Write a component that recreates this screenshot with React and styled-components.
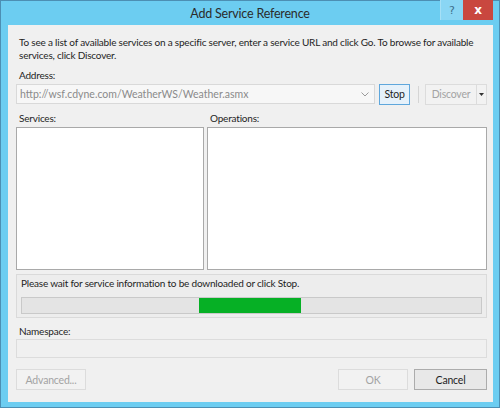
import React from 'react';
import styled, { createGlobalStyle } from 'styled-components';

const GlobalStyle = createGlobalStyle`
  html, body {
    margin: 0;
    padding: 0;
    background: #ffffff;
  }
  body {
    font-family: Lato, 'Open Sans', sans-serif;
  }
`;

const Window = styled.div`
  width: 500px;
  height: 408px;
  box-sizing: border-box;
  border: 1px solid #4c8fb3;
  background: #6ccdf1;
  display: flex;
  flex-direction: column;
`;

const TitleBar = styled.div`
  height: 24px;
  display: grid;
  grid-template-columns: 1fr auto 1fr;
  align-items: start;
`;

const Title = styled.div`
  grid-column: 2;
  font-size: 12.5px;
  letter-spacing: -0.2px;
  line-height: 25px;
  color: #2b2b2b;
`;

const Caption = styled.div`
  grid-column: 3;
  justify-self: end;
  display: flex;
  margin-right: 6px;
  margin-top: -1px;
`;

const CaptionButton = styled.div`
  width: ${p => (p.$close ? 30 : 22)}px;
  height: 20px;
  display: flex;
  align-items: center;
  justify-content: center;
  background: ${p => (p.$close ? '#c9473f' : '#8ad6f4')};
  border-left: ${p => (p.$close ? 'none' : '1px solid #a6e0f6')};
  color: ${p => (p.$close ? '#ffffff' : '#3e6f8c')};
  font-size: ${p => (p.$close ? 12 : 11)}px;
  font-weight: ${p => (p.$close ? 700 : 400)};
  font-family: 'DejaVu Sans', sans-serif;
`;

const Client = styled.div`
  flex: 1;
  margin: 0 6px 5px 7px;
  background: #f0f0f0;
  padding: 11px 6px 12px 8px;
  display: flex;
  flex-direction: column;
  font-size: 10px;
  letter-spacing: -0.2px;
  color: #1e1e1e;
`;

const Intro = styled.p`
  margin: 0 0 0 3px;
  line-height: 13px;
`;

const Label = styled.div`
  margin: ${p => p.$top || 0}px 0 0 3px;
  line-height: 13px;
  color: #1e1e1e;
`;

const AddressRow = styled.div`
  display: flex;
  align-items: center;
  margin-top: 1px;
  height: 22px;
`;

const Combo = styled.div`
  width: 359px;
  height: 20px;
  box-sizing: border-box;
  border: 1px solid #d9d9d9;
  background: #f7f7f7;
  display: flex;
  align-items: center;
  padding: 0 5px 0 3px;
  color: #8a8a8a;
  font-size: 10.5px;
  letter-spacing: 0;
`;

const ComboText = styled.span`
  flex: 1;
`;

const Chevron = styled.svg`
  width: 8px;
  height: 5px;
`;

const Button = styled.div`
  height: ${p => p.$h || 21}px;
  width: ${p => p.$w}px;
  box-sizing: border-box;
  display: flex;
  align-items: center;
  justify-content: center;
  border: 1px solid ${p => (p.$focus ? '#5fa7dc' : p.$disabled ? '#dcdcdc' : '#acacac')};
  background: ${p => (p.$focus ? '#e6f1fa' : p.$disabled ? '#f2f2f2' : '#e8e8e8')};
  color: ${p => (p.$disabled ? '#a3a3a3' : '#1e1e1e')};
  font-size: 10.5px;
  margin-left: ${p => p.$gap || 0}px;
`;

const Splitter = styled.div`
  width: 1px;
  height: 17px;
  background: #d5d5d5;
  margin: 0 6px 0 8px;
`;

const SplitButton = styled.div`
  height: 21px;
  flex: 1;
  box-sizing: border-box;
  display: flex;
  border: 1px solid #dcdcdc;
  background: #f2f2f2;
  color: #a3a3a3;
  font-size: 10.5px;
`;

const SplitMain = styled.div`
  flex: 1;
  display: flex;
  align-items: center;
  justify-content: center;
  border-right: 1px solid #dcdcdc;
`;

const SplitArrow = styled.div`
  width: 9px;
  display: flex;
  align-items: center;
  justify-content: center;
`;

const Lists = styled.div`
  display: grid;
  grid-template-columns: 188px 1fr;
  column-gap: 3px;
  margin-top: 7px;
`;

const ListBox = styled.div`
  height: 143px;
  box-sizing: border-box;
  border: 1px solid #a9a9a9;
  background: #ffffff;
  margin-top: 2px;
`;

const StatusGroup = styled.div`
  margin-top: 4px;
  height: 44px;
  box-sizing: border-box;
  border: 1px solid #dadada;
  background: #ededed;
  padding: 2px 4px 0 4px;
`;

const StatusText = styled.div`
  line-height: 13px;
  color: #1e1e1e;
`;

const Progress = styled.div`
  margin-top: 7px;
  height: 17px;
  box-sizing: border-box;
  border: 1px solid #c9c9c9;
  background: #e4e4e4;
  display: flex;
`;

const ProgressFill = styled.div`
  background: #06b025;
`;

const Field = styled.div`
  margin-top: 1px;
  height: 19px;
  box-sizing: border-box;
  border: 1px solid #dcdcdc;
  background: #f0f0f0;
`;

const Footer = styled.div`
  margin-top: auto;
  display: flex;
  align-items: center;
`;

const Spacer = styled.div`
  flex: 1;
`;

export default function App() {
  const progress = { start: 177, width: 102 };

  return (
    <>
      <GlobalStyle />
      <Window>
        <TitleBar>
          <Title>Add Service Reference</Title>
          <Caption>
            <CaptionButton>?</CaptionButton>
            <CaptionButton $close>x</CaptionButton>
          </Caption>
        </TitleBar>
        <Client>
          <Intro>
            To see a list of available services on a specific server, enter a service URL and click Go. To browse for available services, click Discover.
          </Intro>
          <Label $top={7}>Address:</Label>
          <AddressRow>
            <Combo>
              <ComboText>http://wsf.cdyne.com/WeatherWS/Weather.asmx</ComboText>
              <Chevron viewBox="0 0 8 5">
                <path d="M0.5 0.5 L4 4 L7.5 0.5" fill="none" stroke="#9a9a9a" strokeWidth="1" />
              </Chevron>
            </Combo>
            <Button $w={31} $focus $gap={4}>Stop</Button>
            <Splitter />
            <SplitButton>
              <SplitMain>Discover</SplitMain>
              <SplitArrow>
                <svg width="5" height="3" viewBox="0 0 5 3">
                  <path d="M0 0 H5 L2.5 3 Z" fill="#333" />
                </svg>
              </SplitArrow>
            </SplitButton>
          </AddressRow>
          <Lists>
            <div>
              <Label>Services:</Label>
              <ListBox />
            </div>
            <div>
              <Label>Operations:</Label>
              <ListBox />
            </div>
          </Lists>
          <StatusGroup>
            <StatusText>Please wait for service information to be downloaded or click Stop.</StatusText>
            <Progress>
              <div style={{ width: progress.start }} />
              <ProgressFill style={{ width: progress.width }} />
            </Progress>
          </StatusGroup>
          <Label $top={7}>Namespace:</Label>
          <Field />
          <Footer>
            <Button $w={70} $disabled>Advanced...</Button>
            <Spacer />
            <Button $w={70} $disabled>OK</Button>
            <Button $w={73} $gap={6}>Cancel</Button>
          </Footer>
        </Client>
      </Window>
    </>
  );
}
